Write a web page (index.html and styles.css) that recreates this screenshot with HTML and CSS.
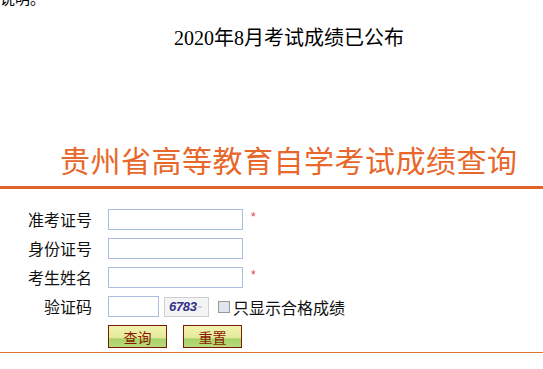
FILE: index.html
```html
<!DOCTYPE html>
<html lang="zh-CN">
<head>
<meta charset="utf-8">
<title>贵州省高等教育自学考试成绩查询</title>
<link rel="stylesheet" href="styles.css">
</head>
<body>
<p class="intro">说明。</p>
<p class="notice">2020年8月考试成绩已公布</p>
<h1 class="title">贵州省高等教育自学考试成绩查询</h1>
<div class="rule-thick"></div>
<form class="query">
  <label class="lbl">准考证号</label>
  <div class="field"><input class="inp" type="text"><span class="req">*</span></div>
  <label class="lbl">身份证号</label>
  <div class="field"><input class="inp" type="text"></div>
  <label class="lbl">考生姓名</label>
  <div class="field"><input class="inp" type="text"><span class="req">*</span></div>
  <label class="lbl">验证码</label>
  <div class="field">
    <input class="inp inp-short" type="text">
    <span class="captcha"><span class="code">6783</span><span class="noise">~</span></span>
    <span class="chk"></span><span class="chk-text">只显示合格成绩</span>
  </div>
  <span></span>
  <div class="field buttons">
    <button class="btn" type="button">查询</button>
    <button class="btn" type="button">重置</button>
  </div>
</form>
<div class="rule-thin"></div>
</body>
</html>
```

FILE: styles.css
```css
html, body {
  margin: 0;
  padding: 0;
  background: #ffffff;
  overflow: hidden;
}
body {
  font-family: "Noto Sans CJK SC", "Liberation Sans", sans-serif;
  color: #000;
}
.intro {
  margin: -11px 0 0 0;
  font-size: 15px;
  line-height: 18px;
  height: 18px;
}
.notice {
  margin: 21px 0 0 0;
  padding-left: 174px;
  font-family: "Liberation Serif", "Noto Sans CJK SC", serif;
  font-size: 20px;
  line-height: 20px;
  height: 20px;
}
.title {
  margin: 96px 0 0 0;
  padding-left: 60px;
  font-size: 30px;
  line-height: 30px;
  height: 30px;
  font-weight: normal;
  letter-spacing: 0.5px;
  color: #e8682c;
  white-space: nowrap;
}
.rule-thick {
  margin-top: 12px;
  height: 3px;
  background: #e0632a;
}
.query {
  display: grid;
  grid-template-columns: 92px auto;
  column-gap: 16px;
  row-gap: 8px;
  align-items: center;
  padding-top: 20px;
  margin: 0;
}
.lbl {
  text-align: right;
  font-size: 16px;
  line-height: 21px;
  color: #111;
}
.field {
  display: flex;
  align-items: center;
  height: 21px;
}
.inp {
  box-sizing: border-box;
  width: 135px;
  height: 21px;
  margin: 0;
  padding: 0 2px;
  border: 1px solid #a9bddf;
  background: #fff;
  outline: none;
}
.inp-short {
  width: 51px;
}
.req {
  margin-left: 8px;
  color: #e23a4a;
  font-family: "Liberation Sans", sans-serif;
  font-size: 12px;
  line-height: 12px;
  align-self: flex-start;
  margin-top: 2px;
}
.captcha {
  box-sizing: border-box;
  display: flex;
  align-items: center;
  margin-left: 5px;
  width: 45px;
  height: 20px;
  border: 1px solid #cfcfcf;
  background: #f4f4f6;
  padding-left: 4px;
}
.code {
  font-family: "Liberation Sans", sans-serif;
  font-style: italic;
  font-weight: bold;
  font-size: 13px;
  line-height: 14px;
  color: #33308a;
  letter-spacing: -0.3px;
}
.noise {
  font-family: "Liberation Sans", sans-serif;
  font-size: 9px;
  color: #b0b0c0;
  margin-left: 0;
}
.chk {
  box-sizing: border-box;
  display: inline-block;
  width: 12px;
  height: 12px;
  margin-left: 9px;
  border: 1px solid #9a9a9a;
  background: #dfe6ef;
}
.chk-text {
  margin-left: 3px;
  font-size: 16px;
  line-height: 20px;
  color: #111;
}
.buttons {
  height: 23px;
  gap: 16px;
}
.btn {
  box-sizing: border-box;
  width: 59px;
  height: 23px;
  margin: 0;
  padding: 0;
  border: 1px solid #7a1c00;
  background: linear-gradient(to bottom, #f3f2b0 0%, #e4ea9c 55%, #a8d26a 62%, #b8da7a 100%);
  color: #8a1800;
  font-family: "Noto Sans CJK SC", sans-serif;
  font-size: 14px;
  line-height: 20px;
  cursor: pointer;
}
.rule-thin {
  margin-top: 4px;
  height: 1px;
  background: #e07434;
}
```
